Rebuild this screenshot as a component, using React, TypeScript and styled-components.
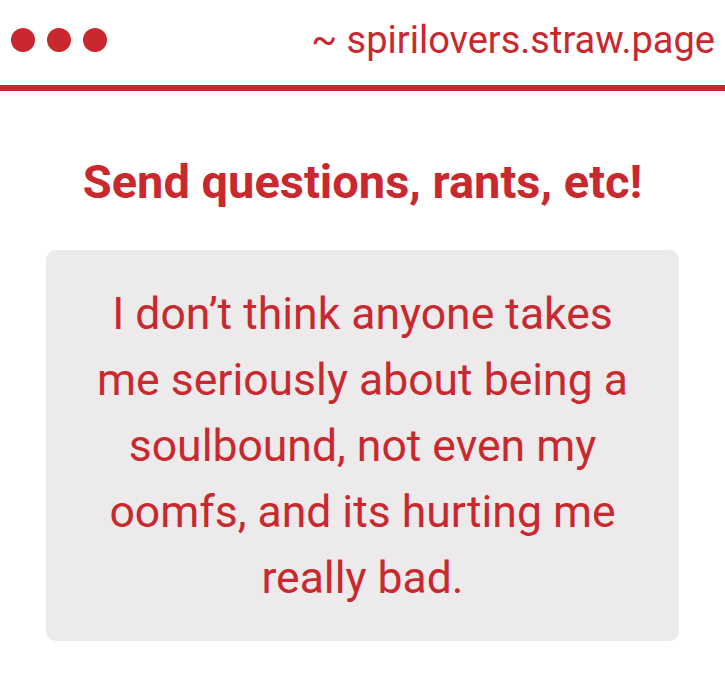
import styled, { createGlobalStyle } from 'styled-components';

const red = '#c9282e';

const GlobalStyle = createGlobalStyle`
  html, body {
    margin: 0;
    padding: 0;
    background: #ffffff;
  }
  body {
    font-family: Roboto, "Liberation Sans", sans-serif;
  }
`;

const Page = styled.div`
  width: 725px;
  height: 687px;
  overflow: hidden;
  background: #ffffff;
`;

const TopBar = styled.header`
  display: flex;
  align-items: center;
  justify-content: space-between;
  height: 80px;
  padding: 0 10px 5px 11px;
  border-bottom: 6px solid ${red};
`;

const Dots = styled.div`
  display: flex;
  gap: 12px;
`;

const Dot = styled.span`
  width: 24px;
  height: 24px;
  border-radius: 50%;
  background: ${red};
`;

const Address = styled.div`
  color: ${red};
  font-size: 38px;
  line-height: 1;
`;

const Content = styled.main`
  display: flex;
  flex-direction: column;
  align-items: center;
  padding-top: 63px;
`;

const Heading = styled.h1`
  margin: 0 0 40px;
  color: ${red};
  font-size: 47px;
  font-weight: 700;
  line-height: 1.2;
`;

const Card = styled.div`
  width: 633px;
  box-sizing: border-box;
  padding: 31px 20px 30px;
  border-radius: 10px;
  background: #edeaeb;
`;

const Message = styled.p`
  margin: 0;
  color: ${red};
  font-size: 44.5px;
  line-height: 66px;
  text-align: center;
`;

export default function App() {
  return (
    <Page>
      <GlobalStyle />
      <TopBar>
        <Dots>
          <Dot />
          <Dot />
          <Dot />
        </Dots>
        <Address>~ spirilovers.straw.page</Address>
      </TopBar>
      <Content>
        <Heading>Send questions, rants, etc!</Heading>
        <Card>
          <Message>
            I don’t think anyone takes
            <br />
            me seriously about being a
            <br />
            soulbound, not even my
            <br />
            oomfs, and its hurting me
            <br />
            really bad.
          </Message>
        </Card>
      </Content>
    </Page>
  );
}
